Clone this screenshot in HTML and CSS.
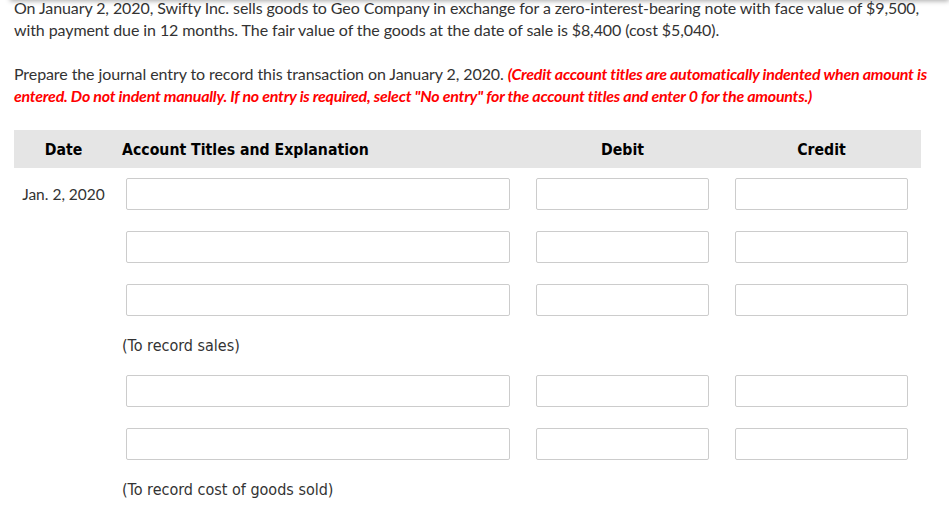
FILE: index.html
```html
<!DOCTYPE html>
<html>
<head>
<meta charset="utf-8">
<link rel="stylesheet" href="styles.css">
</head>
<body>
<div class="topshade"></div>
<div class="page">
  <p class="q">On January 2, 2020, Swifty Inc. sells goods to Geo Company in exchange for a zero-interest-bearing note with face value of $9,500, with payment due in 12 months. The fair value of the goods at the date of sale is $8,400 (cost $5,040).</p>
  <p class="q second">Prepare the journal entry to record this transaction on January 2, 2020. <em class="warn">(Credit account titles are automatically indented when amount is entered. Do not indent manually. If no entry is required, select "No entry" for the account titles and enter 0 for the amounts.)</em></p>
  <div class="journal">
    <div class="hd hd-date">Date</div>
    <div class="hd hd-acct">Account Titles and Explanation</div>
    <div class="hd hd-amt">Debit</div>
    <div class="hd hd-amt">Credit</div>

    <div class="date">Jan. 2, 2020</div>
    <div class="cell"><div class="box"></div></div>
    <div class="cell"><div class="box"></div></div>
    <div class="cell"><div class="box"></div></div>

    <div class="date"></div>
    <div class="cell"><div class="box"></div></div>
    <div class="cell"><div class="box"></div></div>
    <div class="cell"><div class="box"></div></div>

    <div class="date"></div>
    <div class="cell"><div class="box"></div></div>
    <div class="cell"><div class="box"></div></div>
    <div class="cell"><div class="box"></div></div>

    <div class="blank"></div>
    <div class="note">(To record sales)</div>
    <div class="blank"></div>
    <div class="blank"></div>

    <div class="date"></div>
    <div class="cell"><div class="box"></div></div>
    <div class="cell"><div class="box"></div></div>
    <div class="cell"><div class="box"></div></div>

    <div class="date"></div>
    <div class="cell"><div class="box"></div></div>
    <div class="cell"><div class="box"></div></div>
    <div class="cell"><div class="box"></div></div>

    <div class="blank"></div>
    <div class="note">(To record cost of goods sold)</div>
    <div class="blank"></div>
    <div class="blank"></div>
  </div>
</div>
</body>
</html>
```
FILE: styles.css
```css
html, body {
  margin: 0;
  padding: 0;
  background: #fff;
}
body {
  font-family: Lato, "Liberation Sans", sans-serif;
  color: #333;
  overflow: hidden;
}
.topshade {
  position: absolute;
  top: -6px;
  left: 10px;
  right: 0;
  height: 6px;
  box-shadow: 0 1px 5px rgba(0,0,0,0.35);
}
.page {
  padding: 0 14px;
}
.q {
  margin: 0;
  font-size: 16px;
  line-height: 22px;
  letter-spacing: -0.09px;
}
.q:first-child {
  margin-top: -3px;
}
.second {
  margin-top: 22px;
}
.warn {
  color: #f00;
  font-weight: bold;
  font-style: italic;
  letter-spacing: -0.24px;
}
.journal {
  margin-top: 23px;
  width: 907px;
  display: grid;
  grid-template-columns: 99px 410px 199px 199px;
}
.hd {
  background: #e5e5e5;
  height: 38px;
  line-height: 39px;
  font-family: "DejaVu Sans Condensed", "DejaVu Sans", sans-serif;
  font-weight: bold;
  font-size: 15.7px;
  color: #000;
}
.hd-date {
  text-align: center;
}
.hd-acct {
  padding-left: 9px;
}
.hd-amt {
  text-align: center;
}
.date {
  font-size: 15.5px;
  color: #333;
  text-align: center;
  height: 53px;
  padding-top: 10px;
  box-sizing: border-box;
  line-height: 32px;
}
.cell {
  padding: 10px 13px 0;
  height: 53px;
  box-sizing: border-box;
}
.box {
  height: 32px;
  box-sizing: border-box;
  border: 1px solid #ccc;
  border-radius: 2px;
  background: #fff;
}
.blank {
  height: 38px;
}
.note {
  font-family: "DejaVu Sans Condensed", "DejaVu Sans", sans-serif;
  font-size: 16px;
  color: #333;
  padding-left: 9px;
  height: 38px;
  line-height: 38px;
}
```
